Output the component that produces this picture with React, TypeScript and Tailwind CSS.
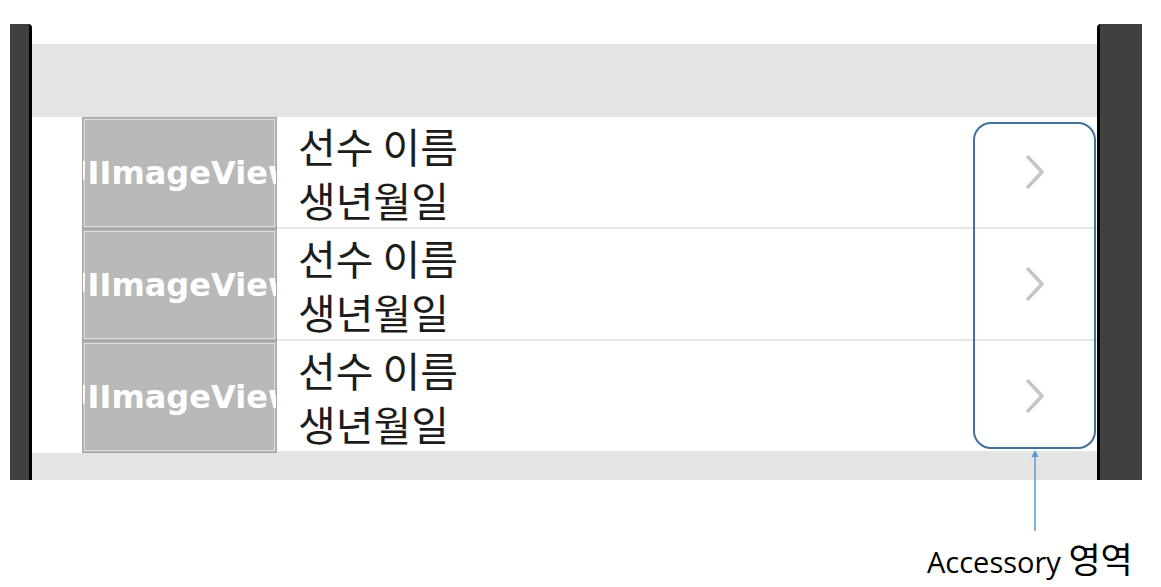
const rows = [0, 1, 2]

function PlayerRow() {
  return (
    <div className="flex h-[112px]">
      <div className="w-[195px] h-full shrink-0 overflow-hidden border border-[#a6a6a6] bg-[#b9b9b9] p-px">
        <div className="h-full border border-[#dadada] flex items-center justify-center">
          <span className="whitespace-nowrap text-white font-bold text-[32px] leading-none font-['DejaVu_Sans',sans-serif]">
            UIImageView
          </span>
        </div>
      </div>
      <div className="flex-1 flex items-center border-b-2 border-[#e6e6e6]">
        <div className="flex-1 pl-[21px] flex flex-col gap-[2px] text-[41px] leading-[52px] text-[#1c1c1c] font-['Noto_Sans_CJK_KR',sans-serif]">
          <span>선수 이름</span>
          <span>생년월일</span>
        </div>
        <div className="w-[124px] flex justify-center">
          <svg width="20" height="34" viewBox="0 0 20 34" fill="none">
            <path d="M3 2 L17 17 L3 32" stroke="#c4c4c4" strokeWidth="3.4" strokeLinecap="round" strokeLinejoin="round" />
          </svg>
        </div>
      </div>
    </div>
  )
}

export default function App() {
  return (
    <div className="relative w-[1161px] h-[587px] bg-white overflow-hidden">
      <div className="mt-[24px] ml-[10px] w-[1132px] h-[456px] flex">
        <div className="w-[22px] bg-[#404040] border-r-[3px] border-black rounded-tr-[4px]" />
        <div className="flex-1 flex flex-col bg-white">
          <div className="h-[20px]" />
          <div className="h-[73px] bg-[#e4e4e4]" />
          <div className="pl-[50px]">
            {rows.map(i => (
              <PlayerRow key={i} />
            ))}
          </div>
          <div className="flex-1 bg-[#e4e4e4]" />
        </div>
        <div className="w-[45px] bg-[#404040] border-l-[3px] border-black rounded-tl-[4px]" />
      </div>

      {/* accessory annotation */}
      <div className="absolute left-[973px] top-[122px] w-[123px] h-[327px] rounded-[18px] border-2 border-[#41719c]" />
      <svg className="absolute left-[1029px] top-[448px]" width="12" height="84" viewBox="0 0 12 84">
        <path d="M6 4 L6 83" stroke="#5b9bd5" strokeWidth="1.5" />
        <path d="M2.5 9 L6 2 L9.5 9 Z" fill="#5b9bd5" />
      </svg>
      <div className="absolute left-[927px] top-[538px] whitespace-nowrap text-[29px] leading-[40px] text-black font-['Open_Sans','Noto_Sans_CJK_KR',sans-serif]">
        Accessory <span className="text-[35px] font-['Noto_Sans_CJK_KR',sans-serif]">영역</span>
      </div>
    </div>
  )
}
